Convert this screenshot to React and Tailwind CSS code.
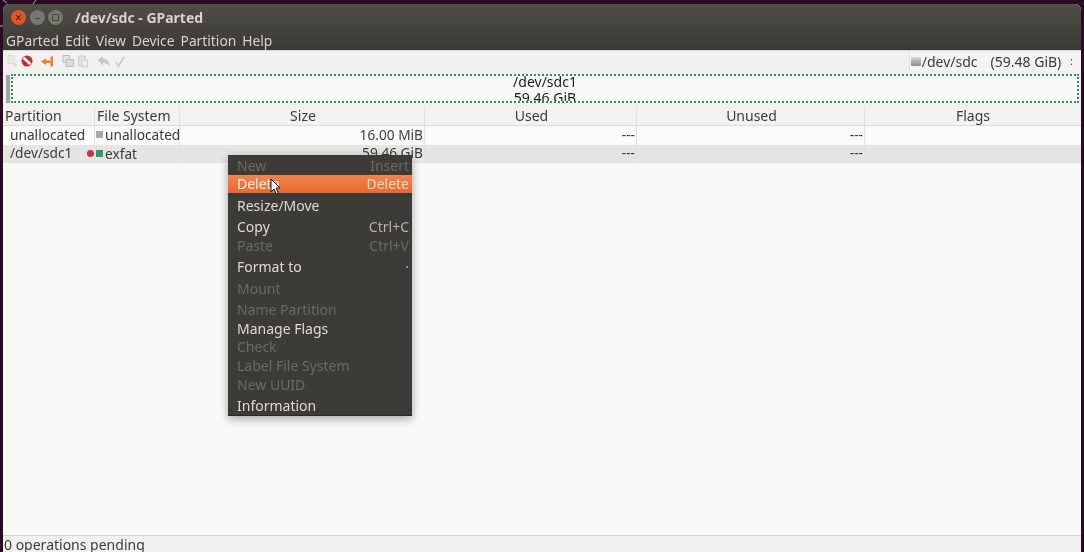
import React from "react";

const columns = [
  { name: "Partition", width: "w-[92px]", align: "pl-[2px] text-left" },
  { name: "File System", width: "w-[85px]", align: "pl-[2px] text-left" },
  { name: "Size", width: "w-[245px]", align: "pl-[2px] text-center" },
  { name: "Used", width: "w-[212px]", align: "pl-[2px] text-center" },
  { name: "Unused", width: "w-[228px]", align: "pl-[2px] text-center" },
  { name: "Flags", width: "flex-1", align: "text-center" },
];

const menuItems = [
  { label: "New", shortcut: "Insert", height: "h-[18px]", disabled: true, up: true },
  { label: "Delete", shortcut: "Delete", height: "h-[18px]", active: true, up: true },
  { label: "Resize/Move", height: "h-[25px]" },
  { label: "Copy", shortcut: "Ctrl+C", height: "h-[18px]", up: true },
  { label: "Paste", shortcut: "Ctrl+V", height: "h-[20px]", disabled: true, up: true },
  { label: "Format to", shortcut: "·", height: "h-[22px]", up: true },
  { label: "Mount", height: "h-[22px]", disabled: true, up: true },
  { label: "Name Partition", height: "h-[20px]", disabled: true, up: true },
  { label: "Manage Flags", height: "h-[18px]", up: true },
  { label: "Check", height: "h-[18px]", disabled: true, up: true },
  { label: "Label File System", height: "h-[19px]", disabled: true },
  { label: "New UUID", height: "h-[20px]", disabled: true, up: true },
  { label: "Information", height: "h-[21px]" },
];

const Row = ({ name, fs, swatch, size, bg, height, lock }) => (
  <div className={`flex text-[13.7px] ${height} ${bg}`}>
    <div className="w-[92px] pl-[7px] relative border-r border-[#e2e1df]">
      {name}
      {lock && <span className="absolute right-0 top-[5px] w-[7px] h-[7px] rounded-full bg-[#d3303f]" />}
    </div>
    <div className="w-[85px] flex items-center pb-[2px] border-r border-[#e2e1df] overflow-hidden">
      <span className={`ml-[1px] mr-[2px] w-[7px] h-[7px] shrink-0 ${swatch}`} />
      <span>{fs}</span>
    </div>
    <div className="w-[245px] pr-[1px] text-right border-r border-[#e2e1df]">{size}</div>
    <div className="w-[212px] pr-[1px] text-right border-r border-[#e2e1df]">---</div>
    <div className="w-[228px] pr-[1px] text-right border-r border-[#e2e1df]">---</div>
    <div className="flex-1" />
  </div>
);

const ToolbarIcons = () => (
  <div className="flex items-center pl-[2px]">
    <svg width="14" height="14" viewBox="0 0 14 14" className="opacity-30">
      <path d="M3 1.5h6v8H3z" fill="#ddd" stroke="#aaa" />
      <path d="M10 8v5M8 11h4" stroke="#999" />
    </svg>
    <svg width="14" height="14" viewBox="0 0 14 14" className="ml-[1px]">
      <circle cx="7" cy="7" r="5.5" fill="#c8283a" />
      <path d="M3.5 3.8l7 6.4" stroke="#fff" strokeWidth="2.6" />
    </svg>
    <svg width="14" height="14" viewBox="0 0 14 14" className="ml-[6px]">
      <path d="M1 7.5l5-3v2h4.5v2.4H6v2z" fill="#ef7d27" />
      <path d="M10.5 2.5h2.5v10h-2.5z" fill="#ef7d27" />
    </svg>
    <svg width="14" height="14" viewBox="0 0 14 14" className="ml-[7px] opacity-60">
      <path d="M2 1.5h6.5v7H2z" fill="#ddd" stroke="#999" />
      <path d="M5 5.5h7.5v7H5z" fill="#ccc" stroke="#999" />
    </svg>
    <svg width="14" height="14" viewBox="0 0 14 14" className="ml-[1px] opacity-40">
      <path d="M2.5 2h7v10h-7z" fill="#ccc" stroke="#999" />
      <path d="M6 6h5.5v7H6z" fill="#eee" stroke="#999" />
    </svg>
    <svg width="14" height="14" viewBox="0 0 14 14" className="ml-[7px] opacity-40">
      <path d="M1 6l5-4v3c4 0 6 2 7 7-2-2-4-3-7-3v3z" fill="#888" />
    </svg>
    <svg width="14" height="14" viewBox="0 0 14 14" className="ml-[2px] opacity-40">
      <path d="M3 8l2.5 4 5.5-9" fill="none" stroke="#999" strokeWidth="2" />
    </svg>
  </div>
);

const App = () => {
  return (
    <div
      className="relative w-[1084px] h-[552px] overflow-hidden bg-[#2a0a24] pt-[4px] px-[3px] text-[14px] text-[#3c3b37] blur-[0.3px]"
      style={{ fontFamily: '"Noto Sans", "Open Sans", sans-serif' }}
    >
      {/* bits of wallpaper around the window */}
      <svg width="40" height="30" viewBox="0 0 40 30" className="absolute left-0 top-0">
        <path d="M3 0l4 3M36 0l-3 4M0 26l3 0" stroke="#b9a9b5" strokeWidth="1" fill="none" />
      </svg>

      <div className="relative flex flex-col h-[548px] rounded-t-[6px] overflow-hidden bg-[#f9f9f8]">
        {/* title bar */}
        <div className="h-[46px] shrink-0 bg-gradient-to-b from-[#504e46] to-[#3a3935]">
          <div className="flex items-center h-[27px] pl-[8px]">
            <span className="flex items-center justify-center w-[15px] h-[15px] rounded-full bg-[#e0562a] text-[#3a1a0c] text-[12px] leading-none">×</span>
            <span className="ml-[4px] flex items-center justify-center w-[15px] h-[15px] rounded-full bg-[#77766f] text-[#4a4944] text-[12px] leading-none">–</span>
            <span className="ml-[3px] flex items-center justify-center w-[15px] h-[15px] rounded-full bg-[#77766f]">
              <span className="w-[7px] h-[7px] border border-[#4a4944]" />
            </span>
            <span className="ml-[12px] text-[#d8d4cb] font-bold text-[14px]">/dev/sdc - GParted</span>
          </div>
          <div className="flex gap-[6px] pl-[3px] h-[19px] leading-[19px] text-[13.8px] text-[#d8d4cb]">
            <span>GParted</span>
            <span>Edit</span>
            <span>View</span>
            <span>Device</span>
            <span>Partition</span>
            <span>Help</span>
          </div>
        </div>

        {/* toolbar */}
        <div className="h-[21px] shrink-0 flex items-center justify-between bg-[#f2f1f0] border-t border-[#d8d7d5]">
          <ToolbarIcons />
          <div className="flex items-center h-full pl-[1px] pr-[8px] bg-[#f5f4f3] border-l border-[#e4e3e1]">
            <span className="w-[10px] h-[9px] mr-[1px] bg-gradient-to-b from-[#d8d8d6] to-[#8a8a88] rounded-[1px]" />
            <span>/dev/sdc</span>
            <span className="ml-[13px]">(59.48 GiB)</span>
            <span className="ml-[9px] text-[10px]">:</span>
          </div>
        </div>

        {/* partition bar */}
        <div className="h-[35px] shrink-0 flex items-stretch gap-[1px] pl-[3px] pr-[2px] py-[3px] bg-[#f2f1f0] overflow-hidden">
          <div className="w-[4px] bg-[#a3a3a3] mt-[1px]" />
          <div className="flex-1 flex flex-col items-center overflow-hidden bg-[#f9f9f9] border-2 border-dotted border-[#2a9158] text-[#1a1a1a] leading-[16px]">
            <span className="mt-[-2px]">/dev/sdc1</span>
            <span>59.46 GiB</span>
          </div>
        </div>

        {/* table header */}
        <div className="h-[20px] shrink-0 flex bg-[#f3f2f1] leading-[19px] border-b border-[#dcdbd9]">
          {columns.map((col) => (
            <div key={col.name} className={`${col.width} ${col.align} border-r border-[#e2e1df] last:border-r-0`}>
              {col.name}
            </div>
          ))}
        </div>

        {/* rows */}
        <Row name="unallocated" fs="unallocated" swatch="bg-[#a9a9a9]" size="16.00 MiB" bg="bg-[#fbfbfa] leading-[17px]" height="h-[19px]" />
        <Row name="/dev/sdc1" fs="exfat" swatch="bg-[#2f9a5f]" size="59.46 GiB" bg="bg-[#e6e5e3] leading-[15px]" height="h-[18px]" lock />

        <div className="flex-1" />

        {/* status bar */}
        <div className="h-[17px] shrink-0 pl-[1px] bg-[#f2f1f0] border-t border-[#d4d3d1] leading-[18px]">
          0 operations pending
        </div>
      </div>

      {/* context menu */}
      <div className="absolute left-[228px] top-[155px] w-[184px] h-[261px] pt-[2px] bg-[#3c3b37] shadow-[0_3px_9px_rgba(0,0,0,0.35)] border-b border-[#2b2a27]">
        {menuItems.map((item) => (
          <div
            key={item.label}
            className={`flex items-center justify-between pl-[9px] pr-[3px] ${item.height} ${
              item.active
                ? "bg-gradient-to-b from-[#f2844c] to-[#e8692f] text-[#fbefe8]"
                : item.disabled
                ? "text-[#6b6a65]"
                : "text-[#dfdbd2]"
            }`}
          >
            <span className={item.up ? "-translate-y-px" : ""}>{item.label}</span>
            {item.shortcut && (
              <span className={`${item.up ? "-translate-y-px" : ""} ${item.disabled ? "" : item.active ? "opacity-80" : "text-[#b5b2aa]"}`}>
                {item.shortcut}
              </span>
            )}
          </div>
        ))}
      </div>

      {/* mouse pointer */}
      <svg width="12" height="18" viewBox="0 0 12 18" className="absolute left-[270px] top-[178px]">
        <path d="M1 1v13l3-3 2.2 5 2.2-1-2.2-5H10z" fill="#fff" stroke="#111" strokeWidth="1" />
      </svg>
    </div>
  );
};

export default App;
